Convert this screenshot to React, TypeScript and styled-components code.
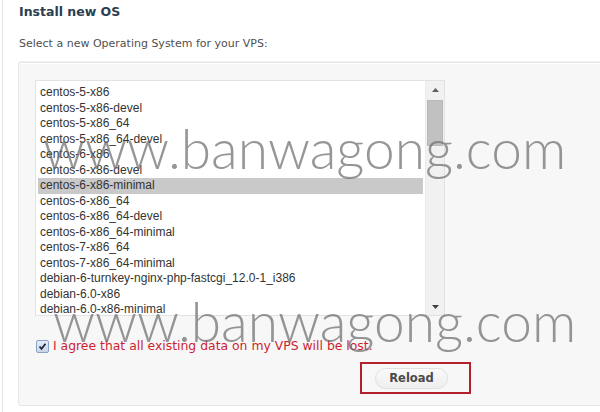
import styled, { createGlobalStyle } from "styled-components";

const GlobalStyle = createGlobalStyle`
  html, body {
    margin: 0;
    padding: 0;
    background: #ffffff;
  }
`;

const Page = styled.div`
  position: relative;
  width: 598px;
  height: 412px;
  margin-left: 2px;
  border-left: 1px solid #e4e4e4;
  box-sizing: border-box;
  overflow: hidden;
  padding: 4px 0 0 15px;
  font-family: "DejaVu Sans", Verdana, sans-serif;
`;

const Title = styled.h2`
  margin: 0 0 0 1px;
  font-size: 12.5px;
  line-height: 16px;
  font-weight: bold;
  color: #2c3e50;
`;

const Intro = styled.p`
  margin: 16px 0 0 1px;
  font-size: 11px;
  line-height: 16px;
  color: #505050;
`;

const Panel = styled.div`
  margin-top: 10px;
  margin-right: -20px;
  height: 344px;
  box-sizing: border-box;
  padding: 17px 0 0 16px;
  background: #f7f7f7;
  border: 1px solid #e6e6e6;
  border-radius: 3px;
  box-shadow: inset 0 1px 0 #ffffff, 0 -1px 0 #f1f1f1;
`;

const ListBox = styled.div`
  display: flex;
  width: 410px;
  height: 236px;
  box-sizing: border-box;
  background: #ffffff;
  border: 1px solid #e2e2e2;
`;

const Options = styled.div`
  flex: 1;
  padding: 4px 2px 0 2px;
  overflow: hidden;
`;

const Option = styled.div<{ $selected?: boolean }>`
  height: 15.5px;
  line-height: 15.5px;
  padding-left: 2px;
  font-family: "Liberation Sans", Arial, sans-serif;
  font-size: 12px;
  color: #333333;
  white-space: nowrap;
  background: ${(p) => (p.$selected ? "#c9c9c9" : "transparent")};
`;

const ScrollBar = styled.div`
  display: flex;
  flex-direction: column;
  width: 18px;
  background: #f1f1f1;
  border-left: 1px solid #ececec;
`;

const Arrow = styled.div`
  height: 17px;
  display: flex;
  align-items: center;
  justify-content: center;
`;

const Track = styled.div`
  flex: 1;
  padding: 2px 1px 0 1px;
`;

const Thumb = styled.div`
  height: 46px;
  background: #c1c1c1;
  border: 1px solid #b8b8b8;
  box-sizing: border-box;
`;

const AgreeRow = styled.label`
  display: flex;
  align-items: center;
  gap: 4px;
  margin-top: 23px;
  font-size: 12.4px;
  line-height: 14px;
  color: #cc1f30;
`;

const CheckBox = styled.span`
  width: 11px;
  height: 11px;
  margin-left: 1px;
  border: 1px solid #8aa3c4;
  border-radius: 2px;
  background: linear-gradient(#e4ecf7, #c8d6ea);
  display: flex;
  align-items: center;
  justify-content: center;
`;

const ButtonRow = styled.div`
  margin: 9px 0 0 325px;
`;

const Highlight = styled.div`
  width: 111px;
  height: 32px;
  box-sizing: border-box;
  border: 2px solid #b3202c;
  display: flex;
  align-items: center;
  padding-left: 13px;
`;

const Button = styled.button`
  width: 73px;
  height: 21px;
  padding: 0;
  border: 1px solid #e0e0e0;
  border-radius: 11px;
  background: linear-gradient(#fafafa, #eeeeee);
  font-family: "DejaVu Sans", Verdana, sans-serif;
  font-size: 11.5px;
  font-weight: bold;
  color: #4a4a4a;
`;

const Watermark = styled.div<{ $top: number; $left: number }>`
  position: absolute;
  top: ${(p) => p.$top}px;
  left: ${(p) => p.$left}px;
  font-family: Lato, "DejaVu Sans", sans-serif;
  font-weight: 300;
  font-size: 55px;
  line-height: 55px;
  color: rgba(110, 110, 110, 0.72);
  pointer-events: none;
  white-space: nowrap;
`;

const systems = [
  "centos-5-x86",
  "centos-5-x86-devel",
  "centos-5-x86_64",
  "centos-5-x86_64-devel",
  "centos-6-x86",
  "centos-6-x86-devel",
  "centos-6-x86-minimal",
  "centos-6-x86_64",
  "centos-6-x86_64-devel",
  "centos-6-x86_64-minimal",
  "centos-7-x86_64",
  "centos-7-x86_64-minimal",
  "debian-6-turnkey-nginx-php-fastcgi_12.0-1_i386",
  "debian-6.0-x86",
  "debian-6.0-x86-minimal",
];

const App: React.FC = () => {
  return (
    <Page>
      <GlobalStyle />
      <Title>Install new OS</Title>
      <Intro>Select a new Operating System for your VPS:</Intro>
      <Panel>
        <ListBox>
          <Options>
            {systems.map((name) => (
              <Option key={name} $selected={name === "centos-6-x86-minimal"}>
                {name}
              </Option>
            ))}
          </Options>
          <ScrollBar>
            <Arrow>
              <svg width="7" height="4" viewBox="0 0 7 4">
                <path d="M0 4 L3.5 0 L7 4 Z" fill="#606060" />
              </svg>
            </Arrow>
            <Track>
              <Thumb />
            </Track>
            <Arrow>
              <svg width="7" height="4" viewBox="0 0 7 4">
                <path d="M0 0 L3.5 4 L7 0 Z" fill="#404040" />
              </svg>
            </Arrow>
          </ScrollBar>
        </ListBox>
        <AgreeRow>
          <CheckBox>
            <svg width="9" height="9" viewBox="0 0 9 9">
              <path d="M1.5 4.5 L3.5 6.8 L7.5 1.8" stroke="#1e2a3a" strokeWidth="1.8" fill="none" />
            </svg>
          </CheckBox>
          I agree that all existing data on my VPS will be lost.
        </AgreeRow>
        <ButtonRow>
          <Highlight>
            <Button>Reload</Button>
          </Highlight>
        </ButtonRow>
      </Panel>
      <Watermark $top={121} $left={40}>www.banwagong.com</Watermark>
      <Watermark $top={294} $left={50}>www.banwagong.com</Watermark>
    </Page>
  );
};

export default App;
